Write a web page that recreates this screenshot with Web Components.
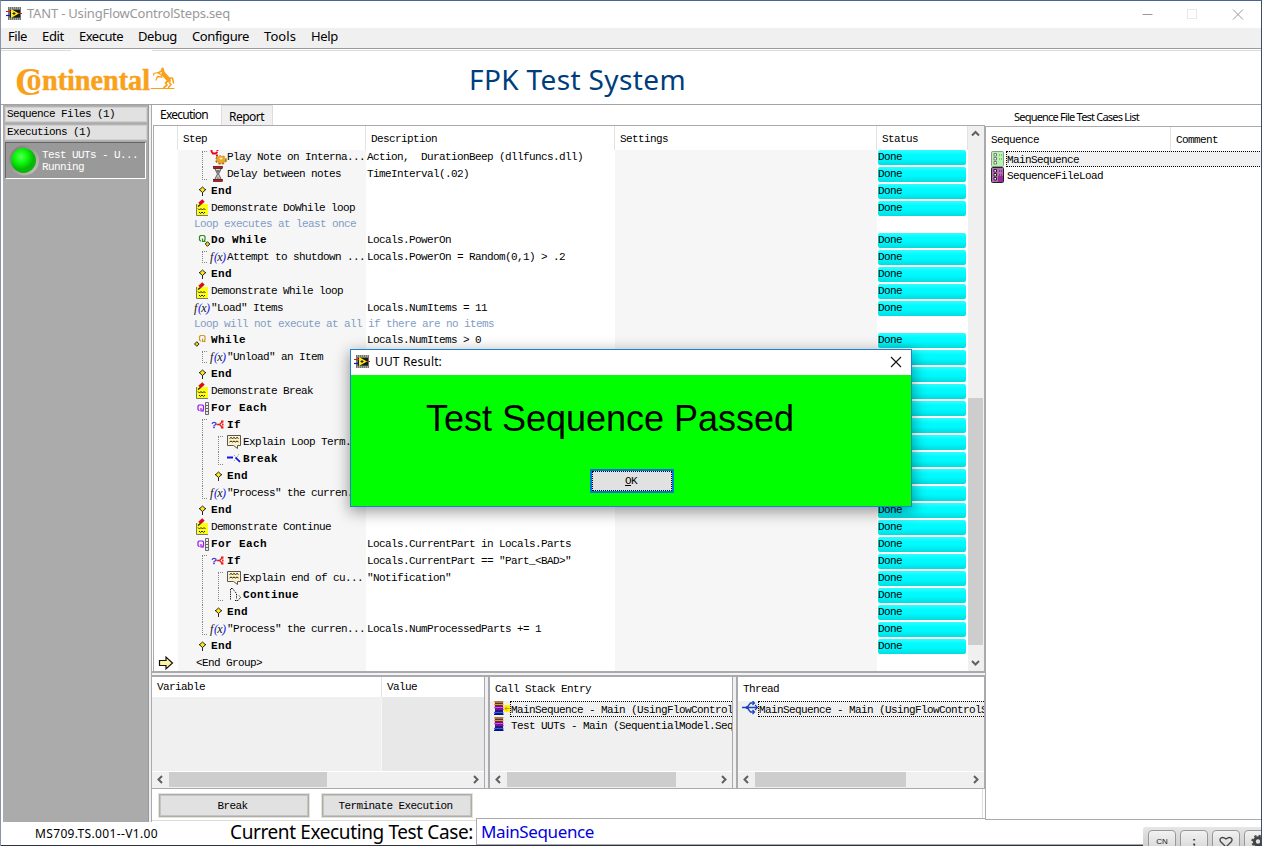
<!DOCTYPE html>
<html lang="en">
<head>
<meta charset="utf-8">
<title>TANT</title>
<style>
html,body{margin:0;padding:0;overflow:hidden;background:#fff}
body{width:1262px;height:846px}
</style>
</head>
<body>
<app-window></app-window>
<script>
const MONO = `font:11px/14px "Liberation Mono",monospace;letter-spacing:-.6px;white-space:pre;`;
const LINE = '#a9a9ae';

function define(name, html, init) {
  customElements.define(name, class extends HTMLElement {
    constructor() {
      super();
      this.attachShadow({ mode: 'open' }).innerHTML = typeof html === 'function' ? '' : html;
    }
    connectedCallback() {
      if (typeof html === 'function') this.shadowRoot.innerHTML = html(this);
      if (init) init(this);
    }
  });
}

/* Text spread over a given width by letter spacing */
define('fit-text', `<style>:host{display:inline-block;white-space:pre;flex:none}</style><slot></slot>`, el => {
  const w = +el.getAttribute('w'), n = el.textContent.length;
  el.style.letterSpacing = '0px';
  const now = el.getBoundingClientRect().width;
  el.style.letterSpacing = ((w - now) / n).toFixed(3) + 'px';
});

const Q = c => `<path d="M3 7H2.500L1.500 6V2.500L2.500 1.500H6L7 2.500V6L6 7M4.500 4.500V7.500H7.500" fill="none" stroke="${c}" stroke-width="1.200"/>`;
const diamond = (x, y) => `<path d="M${x} ${y-2.3}L${x+2.3} ${y}L${x} ${y+2.3}L${x-2.3} ${y}Z" fill="#e8d810" stroke="#222" stroke-width="1"/>`;
const ICONS = {
  gear: `<path d="M1.500 0V1.500L3 3.500H5.500L7.500 2M7.500 -1V1" fill="none" stroke="#f00016" stroke-width="1.800"/><rect x="6" y="4.500" width="2" height="2" fill="#e01020"/><ellipse cx="11" cy="10" rx="4.800" ry="3.700" fill="#d9981e" stroke="#a87414" stroke-width="2" stroke-dasharray="2 1.500"/><ellipse cx="11" cy="9.500" rx="4.400" ry="3.400" fill="#eaa828"/><ellipse cx="11" cy="8.500" rx="1.500" ry="1.100" fill="#f8f0dc"/>`,
  hour: `<path d="M4.500 1H11.500L8.500 7L11.500 13H4.500L7.500 7Z" fill="#ddd" stroke="#555"/><path d="M6 3H10L8 6.500Z" fill="#777"/><path d="M6 12.500L8 9L10 12.500Z" fill="#999"/><rect x="3.500" y="-.7" width="9" height="2" fill="#b81820" stroke="#400" stroke-width=".6"/><rect x="3.500" y="12.500" width="9" height="2" fill="#c01820" stroke="#400" stroke-width=".6"/>`,
  end: `<path d="M8.500 7V12" stroke="#222"/><path d="M8.500 3L11.500 5.800L8.500 8.500L5.500 5.800Z" fill="#ffe910" stroke="#222"/><path d="M5 5.500H6M11 5.500H12" stroke="#222"/>`,
  note: `<path d="M2.500 3V14.500H14" fill="none" stroke="#777"/><rect x="3" y="3" width="11" height="11" fill="#ffff10"/><path d="M4 7.500L5.500 9L7 7.500L8.500 9L10 7.500L11.500 9M5 11L6.500 12.500L8 11L9.500 12.500L11 11" fill="none" stroke="#222" stroke-width="1"/><path d="M4 5.500L6.500 3.500" stroke="#222" stroke-width="1.500"/><path d="M5.500 3L9.500 -.5" stroke="#d80a18" stroke-width="3.600"/>`,
  dowhile: `<g transform="translate(4 1)">${Q('#2c8c20')}</g>${diamond(13.5, 11)}`,
  fx: `<text x="0" y="11" font-family="Liberation Serif" font-size="12" font-style="italic" fill="#111">f</text><text x="4" y="11" font-family="Liberation Serif" font-size="11.500" font-style="italic" fill="#1515e8" textLength="11.500" lengthAdjust="spacingAndGlyphs">(<tspan fill="#111">x</tspan>)</text>`,
  while: `<g transform="translate(4 1)">${Q('#d09a28')}</g>${diamond(2.8, 11)}`,
  each: `<g transform="translate(2.500 2.500)">${Q('#9a14f0')}</g><path d="M11.500 1.500V13.500H14.500V1.500ZM11.500 4.500H14.500M11.500 7.500H14.500M11.500 10.500H14.500" fill="#eee" stroke="#666"/>`,
  if: `<text x="1.500" y="9.500" font-family="Liberation Sans" font-size="9" fill="#2020e0" stroke="#2020e0" stroke-width=".3">?</text><path d="M6.500 6.500H9.500M12.500 3.500L9.500 6.500L12.500 9.500" fill="none" stroke="#f01818" stroke-width="1.400"/><path d="M11 3.500h2.500M11 9.500h2.500M12 6.500h1.500" stroke="#f01818" stroke-width="1.800"/>`,
  say: `<path d="M1.500 .5H14.500V10.500H11.500V13.500L7.500 10.500H1.500Z" fill="#fdf3c4" stroke="#555"/><path d="M3.500 3.500L5 2.500L6.500 3.500L8 2.500L9.500 3.500L11 2.500L12.500 3.500M3.500 7L5 6L6.500 7L8 6L9.500 7L11 6L12.500 7" fill="none" stroke="#222"/>`,
  brk: `<path d="M1 5.500H7" stroke="#1010f0" stroke-width="2"/><path d="M8 3L14 9M8 9L13 2" stroke="#999" stroke-dasharray="1.500 1"/><path d="M9.500 5.500L14 10" stroke="#1010f0" stroke-width="1.700"/>`,
  cont: `<path d="M4.500 11.500V1M6.500 .5L10.500 5.500V11M5 .5H7" fill="none" stroke="#111" stroke-dasharray="1.300 1"/><path d="M9 12.500H12L14.500 9.500L13 7.500" fill="none" stroke="#111" stroke-dasharray="1.500 .7"/>`,
  arrow: `<path d="M1.500 4.500H8V1L14.500 7L8 13V9.500H1.500Z" fill="#fbf4a0" stroke="#111" stroke-width="1.200"/>`,
  stack: `<path d="M3 0H11V14H3Z" fill="#18106a"/><path d="M2 1H11.500M2 3.500H11.500" stroke="#e89a18" stroke-width="1.600"/><path d="M2 6.500H11.500" stroke="#f040f0" stroke-width="1.600"/><path d="M3 8.500H11.500" stroke="#8a10a0" stroke-width="1.500"/><path d="M2 11.500H11.500" stroke="#2868e8" stroke-width="1.300"/><path d="M2 13.300H11.500" stroke="#081088" stroke-width="1.400"/>`,
  stackcur: `<rect x="12" y="4" width="6" height="7" fill="#fff010"/><path d="M17.500 7.500H13M15 5.500L13 7.500L15 9.500" stroke="#d89000" fill="none"/>`,
  thread: `<path d="M0 6.500H15M5 6.500L8.500 2H12M5 6.500L8.500 11H12" fill="none" stroke="#1a40c0" stroke-width="1.300"/><path d="M10.500 0L12.500 2L10.500 4M10.500 9L12.500 11L10.500 13M13 4L15.500 6.500L13 9" fill="none" stroke="#1a40c0" stroke-width="1.200"/><circle cx="5" cy="6.500" r="1.500" fill="#1a40c0"/>`,
  seqg: `<rect x=".5" y=".5" width="12" height="15" rx="1" fill="#b4f4b0" stroke="#8a9a88"/><path d="M3 2.500h2.500v2.500H3ZM3 6.500h2.500v2.500H3ZM3 10.500h2.500v2.500H3Z" fill="#fff" stroke="#777"/><path d="M8 4h4M8 8h4" stroke="#5a8a58" stroke-dasharray="1 1"/>`,
  seqp: `<rect x=".5" y=".5" width="12" height="15" rx="1" fill="#b86cb8" stroke="#222"/><path d="M7 9h5v6H7z" fill="#9a2c9a"/><path d="M3 2.500h2.500v2.500H3ZM3 6.500h2.500v2.500H3ZM3 10.500h2.500v2.500H3Z" fill="#fff" stroke="#222"/><path d="M8 4h4M8 8h4" stroke="#401040" stroke-dasharray="1 1"/>`,
  app: `<rect x="2" y="1" width="13" height="13" fill="#6e7472"/><path d="M3 2H15M3 13H15" stroke="#ddd" stroke-width="1" stroke-dasharray="1 1"/><rect x="4" y="4" width="10" height="7.500" fill="#151c14"/><path d="M5 3L13 7.500L5 12Z" fill="#ffe818"/><path d="M6.500 7.500h3M8 6v3" stroke="#222"/><path d="M0 5.500H5M13 7.500H16" stroke="#e01818" stroke-width="1.200"/><path d="M0 9.500H5" stroke="#1010e8" stroke-width="1.200"/>`
};
define('ui-icon', el => `<style>:host{display:block;flex:none;width:17px;height:15px}svg{display:block;overflow:visible}</style><svg width="17" height="15">${ICONS[el.getAttribute('name')]}</svg>`);

/* Scroll bar, horizontal or vertical; thumb given as "start,length" */
define('scroll-bar', el => {
  const v = el.hasAttribute('vertical'), [s, l] = el.getAttribute('thumb').split(',');
  const svg = d => `<svg width="15" height="15"><path d="${d}" fill="none" stroke="#606060" stroke-width="2"/></svg>`;
  return `<style>:host{display:flex;flex:none;background:#f0f0f0;flex-direction:${v ? 'column' : 'row'};${v ? 'width:16px' : 'height:16px'}}
  svg{display:block;flex:none}.t{flex:1;min-width:0;min-height:0;display:flex;flex-direction:inherit}
  .b{background:#cdcdcd;${v ? `margin-top:${s}px;height:${l}px;width:15px` : `margin-left:${s}px;width:${l}px;height:15px`}}</style>
  ${svg(v ? 'M4 9.500L7.500 6L11 9.500' : 'M10 4L6.500 7.500L10 11')}<div class="t"><div class="b"></div></div>${svg(v ? 'M4 5L7.500 8.500L11 5' : 'M5 4L8.500 7.500L5 11')}`;
});

define('status-pill', `<style>:host{display:block;height:15px;width:88px;margin-left:1px;border-radius:2px;background:linear-gradient(#35fbff 0,#00fcff 30%,#00f8fc 60%,#00dce0 100%);color:#000;box-sizing:border-box;padding-left:0}</style><slot></slot>`);

/* One step line: indent level, icon, name, description, status */
define('step-row', el => {
  const a = n => el.getAttribute(n) || '';
  const lv = +a('level'), g = a('guides').split(',').filter(Boolean);
  const guides = Array.from({ length: lv }, (_, i) => `<i class="${g[i] || 'm'}"></i>`).join('');
  return `<style>
  :host{display:grid;grid-template-columns:24px 188px 249px 262px 91px;height:17px;${MONO}color:#000}
  :host([comment]){height:15px;line-height:12px;color:#7f9dc4}
  .s{display:flex;padding-left:16px;min-width:0}
  .n{display:block}
  :host([bold]) .n{font-weight:bold;letter-spacing:.4px}
  i{width:16px;height:17px;flex:none;position:relative}
  i::before{content:"";position:absolute;left:8px;top:0;bottom:0;border-left:1px dotted #888}
  i.f::before{top:1px;width:4px;border-top:1px dotted #888}
  i.l::before{bottom:4px;width:4px;border-bottom:1px dotted #888}
  i.o::before{top:1px;bottom:4px;width:4px;border-top:1px dotted #888;border-bottom:1px dotted #888}
  .d{padding-left:1px}
  .g{padding-left:4px}
  </style><div class="g">${a('mark') ? '<ui-icon name="arrow"></ui-icon>' : ''}</div>
  <div class="s">${guides}${a('icon') ? `<ui-icon name="${a('icon')}"></ui-icon>` : ''}<span class="n"${a('mark') ? ' style="padding-left:2px"' : ''}><slot></slot></span></div>
  <div class="d">${a('desc')}</div><div></div><div>${a('status') ? `<status-pill>${a('status') === '-' ? '' : a('status')}</status-pill>` : ''}</div>`;
});

const D = 'Done';
const STEPS = [
  [1, 'gear', 'Play Note on Interna...', 'Action,  DurationBeep (dllfuncs.dll)', D, 'f'],
  [1, 'hour', 'Delay between notes', 'TimeInterval(.02)', D, 'l'],
  [0, 'end', '*End', '', D],
  [0, 'note', 'Demonstrate DoWhile loop', '', D],
  [0, '', '#Loop executes at least once'],
  [0, 'dowhile', '*Do While', 'Locals.PowerOn', D],
  [1, 'fx', 'Attempt to shutdown ...', 'Locals.PowerOn = Random(0,1) &gt; .2', D, 'o'],
  [0, 'end', '*End', '', D],
  [0, 'note', 'Demonstrate While loop', '', D],
  [0, 'fx', '&quot;Load&quot; Items', 'Locals.NumItems = 11', D],
  [0, '', '#Loop will not execute at all if there are no items'],
  [0, 'while', '*While', 'Locals.NumItems &gt; 0', D],
  [1, 'fx', '&quot;Unload&quot; an Item', '', '-', 'o'],
  [0, 'end', '*End', '', '-'],
  [0, 'note', 'Demonstrate Break', '', '-'],
  [0, 'each', '*For Each', '', '-'],
  [1, 'if', '*If', '', '-', 'f'],
  [2, 'say', 'Explain Loop Term...', '', '-', 'm,f'],
  [2, 'brk', '*Break', '', '-', 'm,l'],
  [1, 'end', '*End', '', '-', 'm'],
  [1, 'fx', '&quot;Process&quot; the curren...', '', '-', 'l'],
  [0, 'end', '*End', '', D],
  [0, 'note', 'Demonstrate Continue', '', D],
  [0, 'each', '*For Each', 'Locals.CurrentPart in Locals.Parts', D],
  [1, 'if', '*If', 'Locals.CurrentPart == &quot;Part_&lt;BAD&gt;&quot;', D, 'f'],
  [2, 'say', 'Explain end of cu...', '&quot;Notification&quot;', D, 'm,f'],
  [2, 'cont', '*Continue', '', D, 'm,l'],
  [1, 'end', '*End', '', D, 'm'],
  [1, 'fx', '&quot;Process&quot; the curren...', 'Locals.NumProcessedParts += 1', D, 'l'],
  [0, 'end', '*End', '', D],
  [0, '', '!&lt;End Group&gt;']
];
const attr = s => (s || '').replace(/&/g, '&amp;').replace(/"/g, '&quot;');
define('step-grid', `<style>
:host{display:flex;height:545px;border:1px solid ${LINE};border-bottom:0;margin-left:1px}
.c{flex:1;min-width:0;overflow:hidden;background:linear-gradient(90deg,#fff 24px,#f6f6f6 24px 212px,#fff 212px 461px,#f6f6f6 461px 723px,#fff 723px)}
.h{display:grid;grid-template-columns:24px 188px 249px 262px 91px;height:24px;background:#fff;${MONO}line-height:26px}
.h span{border-right:1px solid #e2e2e2;padding-left:5px;overflow:hidden}
.b{height:521px;overflow:hidden}
</style><div class="c"><div class="h"><span></span><span>Step</span><span>Description</span><span>Settings</span><span>Status</span></div>
<div class="b">${STEPS.map(([l, ic, n, d, s, g]) => {
  const k = n[0], f = '*#!'.includes(k);
  return `<step-row level="${l}" icon="${ic}" desc="${attr(d)}" status="${s || ''}" guides="${g || ''}"${k === '*' ? ' bold' : k === '#' ? ' comment' : k === '!' ? ' mark="1"' : ''}>${f ? n.slice(1) : n}</step-row>`;
}).join('')}</div></div><scroll-bar vertical thumb="257,247"></scroll-bar>`);

define('title-bar', `<style>
:host{display:flex;height:27px;align-items:center;background:#fff;padding-left:5px;font:13px/26px "Noto Sans",sans-serif;color:#999}
ui-icon{margin:-2px 4px 0 0}fit-text{margin-top:-3px}.c{margin-left:auto;display:block}
</style><ui-icon name="app"></ui-icon><fit-text w="203">TANT - UsingFlowControlSteps.seq</fit-text>
<svg class="c" width="122" height="27"><path d="M3.500 13.500H13.500" stroke="#999" stroke-width="1"/><rect x="48.500" y="8.500" width="9" height="9" fill="none" stroke="#e8e8e8"/><path d="M94 8.500L104 18.500M104 8.500L94 18.500" stroke="#999"/></svg>`);

define('menu-bar', `<style>
:host{display:flex;height:20px;background:#f0f0f0;padding-left:7px;border-bottom:1px solid #9c9c9c;font:13px/17px "Noto Sans",sans-serif;color:#000}
</style>${[['File', 19, 15], ['Edit', 22, 15], ['Execute', 44, 15], ['Debug', 39, 15], ['Configure', 57, 15], ['Tools', 32, 15], ['Help', 27, 0]].map(([t, w, m]) => `<fit-text w="${w}" style="margin-right:${m}px">${t}</fit-text>`).join('')}`);

define('brand-header', `<style>
:host{display:flex;height:55px;position:relative;border-bottom:1px solid #a3a3a3;background:linear-gradient(90deg,#dcdcdc 70px,#fff 70px 151px,#dcdcdc 151px) 0 1px/100% 1px no-repeat #fff;align-items:flex-start}
svg{display:block;flex:none;margin:15px 0 0 12px}
fit-text{margin:9px 0 0 292px;font:28px/42px "Noto Sans",sans-serif;color:#003d7c}
</style><svg width="164" height="36" fill="#f9a11b" font-family="Liberation Serif" font-weight="bold"><text x="2" y="31" font-size="39" textLength="27" lengthAdjust="spacingAndGlyphs">C</text><text x="13.500" y="26" font-size="32" textLength="15" lengthAdjust="spacingAndGlyphs" stroke="#fff" stroke-width="3" paint-order="stroke">o</text><text x="29" y="25.500" font-size="30" textLength="108" lengthAdjust="spacingAndGlyphs" stroke="#f9a11b" stroke-width=".5">ntinental</text>
<g fill="none" stroke="#f9a11b" stroke-linecap="round" stroke-linejoin="round"><path d="M138 24.500H161" stroke-width="1"/><path d="M149 6.500L146 8.500" stroke-width="2"/><path d="M149.500 5L150.500 9" stroke-width="2.800"/><path d="M150.500 10L155.500 15.500" stroke-width="4.400"/><path d="M149 11.500L144.500 8.500L141 9.500L140.500 11" stroke-width="1.300"/><path d="M149 13L144.500 12.500L143 16" stroke-width="1.300"/><path d="M155.500 16.500L152.500 19L154 21L151 23.500" stroke-width="1.700"/><path d="M157 16.500L156.500 19L158 20.500L155.500 23.500" stroke-width="1.600"/><path d="M157 14L159.500 14L160.500 19" stroke-width="1.500"/></g></svg><fit-text w="217">FPK Test System</fit-text>`);

define('side-bar', `<style>
:host{display:block;width:145px;height:717px;background:#ababab;box-sizing:border-box;padding-top:1px;${MONO}}
.h{height:15px;border:1px solid #b2b2b2;outline:1px solid #d0d0d0;outline-offset:-2px;background:#e1e1e1;margin:0 1px 1px;line-height:15px;padding-left:2px;width:140px}
.i{display:flex;box-sizing:border-box;margin:1px 0 0 2px;width:141px;height:37px;background:#999;border:1px solid #fff;border-top-color:#666;border-left-color:#666;color:#fff;line-height:12px}
.t{margin:6px 0 0 2px}svg{display:block;margin:1px 0 0 2px}
</style><div class="h">Sequence Files (1)</div><div class="h">Executions (1)</div><div class="i"><svg width="32" height="34"><defs><radialGradient id="a" cx=".4" cy=".35"><stop offset="0" stop-color="#58ff58"/><stop offset=".55" stop-color="#08f808"/><stop offset="1" stop-color="#08b808"/></radialGradient><linearGradient id="b" x2="1" y2="1"><stop stop-color="#777"/><stop offset="1" stop-color="#ccc8c0"/></linearGradient></defs><circle cx="16" cy="16.500" r="15" fill="url(#b)"/><circle cx="15.500" cy="16.500" r="12.500" fill="url(#a)"/></svg><div class="t">Test UUTs - U...<br>Running</div></div>`);

define('tab-strip', `<style>
:host{display:flex;height:20px;font:12px/20px "Noto Sans",sans-serif;color:#000;align-items:flex-end;position:relative}
.a{width:69px;height:20px;box-sizing:border-box;padding-left:8px;margin-top:-1px;background:#fff}
.r{width:50px;height:19px;box-sizing:content-box;background:#f0f0f0;border:1px solid #ddd;border-bottom:0;line-height:22px;padding:0}
.r fit-text{margin-left:7px}
</style><div class="a"><fit-text w="48">Execution</fit-text></div><div class="r"><fit-text w="35">Report</fit-text></div>`);

/* Lower panel: header, body and a scroll bar */
define('list-panel', el => `<style>
:host{display:flex;flex-direction:column;height:111px;box-sizing:border-box;background:#f0f0f0;overflow:hidden;border-right:1px solid ${LINE};${MONO}}
.h{background:#fff;height:${el.getAttribute('head')}px;display:flex;flex:none}
.b{flex:1;min-height:0;overflow:hidden;border-bottom:1px solid #fff}
</style><div class="h"><slot name="head"></slot></div><div class="b"><slot></slot></div><scroll-bar thumb="${el.getAttribute('thumb')}"></scroll-bar>`);

define('entry-row', el => `<style>
:host{display:flex;height:16px;${MONO}line-height:16px;width:600px}
ui-icon{margin-left:${el.getAttribute('pad') || 2}px}
.w{width:${el.getAttribute('iw')}px;flex:none;display:flex}
.t{flex:1;border:1px solid transparent;box-sizing:border-box}
:host([focus]) .t{border:1px dotted #000;background:${el.getAttribute('bg') || 'none'}}
</style><div class="w"><ui-icon name="${el.getAttribute('icon')}"></ui-icon>${el.hasAttribute('cur') ? '<ui-icon name="stackcur" style="margin-left:-17px"></ui-icon>' : ''}</div><div class="t"><slot></slot></div>`);

define('push-button', `<style>
:host{display:block;width:150px;height:23px;box-sizing:border-box;background:#e1e1e1;border:1px solid #adadad;outline:1px solid #e6e4d6;box-shadow:inset 0 0 0 1px #c4c4c4;text-align:center;${MONO}line-height:23px;padding-right:3px}
</style><slot></slot>`);

define('case-list', `<style>
:host{display:flex;flex-direction:column;flex:1;min-width:0;height:715px;border-bottom:1px solid ${LINE};box-sizing:border-box}
.t{height:21px;padding-left:29px;font:11px/24px "Noto Sans",sans-serif;flex:none}
.l{flex:1;border-top:1px solid ${LINE};border-left:1px solid ${LINE};overflow:hidden;margin-top:0}
.h{display:flex;height:24px;${MONO}line-height:26px}.h span{padding-left:5px}
.h span:first-child{width:179px;border-right:1px solid #e2e2e2}
</style><div class="t"><fit-text w="125">Sequence File Test Cases List</fit-text></div><div class="l"><div class="h"><span>Sequence</span><span>Comment</span></div>
<entry-row icon="seqg" iw="20" pad="5" bg="#f0f0f0" focus>MainSequence</entry-row><entry-row icon="seqp" iw="20" pad="5">SequenceFileLoad</entry-row></div>`);

define('execution-pane', `<style>
:host{display:block;width:833px;height:717px}
.split{height:2px;border:2px solid ${LINE};border-width:2px 0;background:#f4f4f4}
.p{display:flex;height:111px;border-bottom:1px solid ${LINE}}
.g{width:3px;background:#f0f0f0;border-right:2px solid ${LINE};box-sizing:border-box}
.va{display:flex;height:100%}.va i{width:229px;border-right:1px solid #f6f6f6}.va b{flex:1;background:#e8e8e8}
.hd{line-height:21px;padding-left:5px}
.btn{display:flex;gap:13px;padding:5px 0 0 7px;height:26px;border-bottom:1px solid #ddd;border-right:1px solid #ddd;margin-right:2px}
</style><tab-strip></tab-strip><step-grid></step-grid><div class="split"></div>
<div class="p">
<list-panel head="20" thumb="2,158" style="width:333px"><span slot="head" class="hd" style="width:224px;border-right:1px solid #e2e2e2">Variable</span><span slot="head" class="hd">Value</span><div class="va"><i></i><b></b></div></list-panel>
<div class="g" style="width:5px"></div>
<list-panel head="24" thumb="2,169" style="width:243px"><span slot="head" class="hd" style="line-height:25px">Call Stack Entry</span><entry-row icon="stack" iw="20" cur focus>MainSequence - Main (UsingFlowControlSteps.seq)</entry-row><entry-row icon="stack" iw="20">Test UUTs - Main (SequentialModel.Seq)</entry-row></list-panel>
<div class="g" style="width:5px"></div>
<list-panel head="24" thumb="2,151" style="width:247px"><span slot="head" class="hd" style="line-height:25px">Thread</span><entry-row icon="thread" iw="20" pad="4" focus>MainSequence - Main (UsingFlowControlSteps.seq)</entry-row></list-panel>
</div>
<div class="btn"><push-button>Break</push-button><push-button>Terminate Execution</push-button></div>`);

define('status-bar', `<style>
:host{display:flex;height:24px;font-family:"Noto Sans",sans-serif;color:#000;padding-left:34px;border-bottom:1px solid #2c3444;margin-top:-1px;background:linear-gradient(${LINE},${LINE}) 475px 100%/800px 1px no-repeat}
.v{font-size:12px;line-height:25px}.c{font-size:19px;line-height:23px;margin-left:72px}
.i{margin:-3px 0 0 3px;width:504px;height:25px;background:#fff;border-top:1px solid ${LINE};border-left:1px solid ${LINE};border-bottom:1px solid ${LINE};color:#0000e0;font-size:17px;line-height:26px;padding-left:4px}
</style><fit-text class="v" w="123">MS709.TS.001--V1.00</fit-text><fit-text class="c" w="243">Current Executing Test Case:</fit-text><div class="i"><fit-text w="113">MainSequence</fit-text></div>`);

define('ime-bar', `<style>
:host{display:flex;gap:4px;position:absolute;left:1143px;top:827px;width:119px;height:19px;overflow:hidden;background:linear-gradient(#e6e6e6,#cfcfcf);border-radius:3px 0 0 0;padding:3px 0 0 5px;box-sizing:border-box}
.k{width:28px;height:24px;flex:none;box-sizing:border-box;border:1px solid #999;border-radius:4px;background:linear-gradient(#f2f2f2,#d2d2d2);font:8px/22px "Liberation Sans",sans-serif;text-align:center;color:#222}
svg{display:block;margin:1px auto}
</style><div class="k">CN</div><div class="k"><b style="font-size:11px;line-height:20px">;</b></div><div class="k"><svg width="16" height="18"><path d="M8 15L2.500 9.500C1 7 3.500 3.500 8 7C12.500 3.500 15 7 13.500 9.500Z" fill="none" stroke="#444" stroke-width="1.300"/></svg></div><div class="k"><svg width="18" height="18"><circle cx="9" cy="9.500" r="3.700" fill="none" stroke="#444" stroke-width="3"/><circle cx="9" cy="9.500" r="5.700" fill="none" stroke="#444" stroke-width="2" stroke-dasharray="2.200 2.277"/></svg></div>`);

define('result-dialog', `<style>
:host{display:flex;flex-direction:column;position:absolute;left:350px;top:349px;width:562px;height:158px;box-sizing:border-box;border:1px solid #1883d7;background:#0f0;box-shadow:0 4px 14px 1px rgba(0,0,0,.38)}
.t{display:flex;align-items:center;height:25px;flex:none;background:#fff;padding-left:3px;font:12px/24px "Noto Sans",sans-serif;color:#000}
.t ui-icon{margin:-2px 4px 0 0}.t fit-text{margin-top:-1px}.t svg{margin:-1px 9px 0 auto}
.m{margin:22px 0 0 75px;font:36px/44px "Liberation Sans",sans-serif;align-self:flex-start}
.k{box-sizing:border-box;width:84px;height:24px;margin:28px 0 0 239px;border:2px solid #0078d7;background:#e1e1e1;padding:0}
.k div{border:1px dotted #000;height:18px;text-align:center;${MONO}line-height:18px;padding-right:2px}
</style><div class="t"><ui-icon name="app"></ui-icon><fit-text w="67">UUT Result:</fit-text><svg width="12" height="12"><path d="M1 1L11 11M11 1L1 11" stroke="#111" stroke-width="1.100"/></svg></div>
<fit-text class="m" w="368">Test Sequence Passed</fit-text><div class="k"><div><u>O</u>K</div></div>`);

define('app-window', `<style>
:host{display:block;width:1262px;height:846px;box-sizing:border-box;border:1px solid #4a6490;border-bottom:0;border-left-color:#8a93a8;border-right-color:#38506e;position:relative;background:#fff;overflow:hidden}
.main{display:flex;padding-left:2px;height:717px}
.sp{width:4px;box-sizing:border-box;border-left:1px solid #999;border-right:1px solid ${LINE};background:#f0f0f0;flex:none}
.over{position:absolute;left:-1px;top:-1px;width:0;height:0}
</style><title-bar></title-bar><menu-bar></menu-bar><brand-header></brand-header>
<div class="main"><side-bar></side-bar><div class="sp"></div><execution-pane></execution-pane><case-list></case-list></div>
<status-bar></status-bar><div class="over"><result-dialog></result-dialog><ime-bar></ime-bar></div>`);
</script>
</body>
</html>
